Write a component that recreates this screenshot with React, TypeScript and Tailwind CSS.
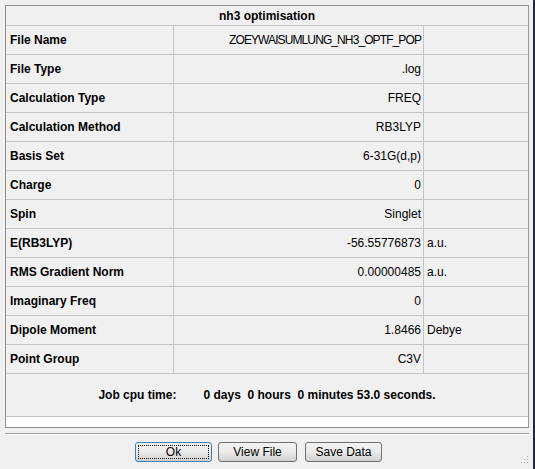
const rows: [string, string, string][] = [
  ["File Name", "ZOEYWAISUMLUNG_NH3_OPTF_POP", ""],
  ["File Type", ".log", ""],
  ["Calculation Type", "FREQ", ""],
  ["Calculation Method", "RB3LYP", ""],
  ["Basis Set", "6-31G(d,p)", ""],
  ["Charge", "0", ""],
  ["Spin", "Singlet", ""],
  ["E(RB3LYP)", "-56.55776873", "a.u."],
  ["RMS Gradient Norm", "0.00000485", "a.u."],
  ["Imaginary Freq", "0", ""],
  ["Dipole Moment", "1.8466", "Debye"],
  ["Point Group", "C3V", ""],
];

function WinButton({ label, focused = false, className = "" }: { label: string; focused?: boolean; className?: string }) {
  return (
    <button
      className={`relative h-[20px] rounded-[3px] border bg-gradient-to-b from-[#f2f2f2] via-[#ebebeb] to-[#cfcfcf] text-[12px] leading-none text-black ${
        focused ? "border-[#3c7fb1]" : "border-[#707070]"
      } ${className}`}
    >
      {focused && (
        <span className="pointer-events-none absolute inset-[2px] border border-dotted border-black" />
      )}
      {label}
    </button>
  );
}

export default function App() {
  return (
    <div
      className="relative flex h-[469px] w-[535px] flex-col overflow-hidden border-r-2 border-[#1e2b3c] bg-[#f0f0f0] text-black"
      style={{ fontFamily: '"Liberation Sans", Arial, sans-serif' }}
    >
      <div className="ml-[5px] mt-[5px] w-[524px] border border-[#8e8e8e] border-r-[#9a9a9a]">
        <div className="flex h-[20px] items-center justify-center border-b border-[#c4c4c4] text-[12px] font-bold">
          nh3 optimisation
        </div>
        {rows.map(([label, value, unit]) => (
          <div key={label} className="flex h-[29px] border-b border-[#c4c4c4] text-[12px]">
            <div className="flex w-[168px] items-center border-r border-[#c4c4c4] pl-[4px] font-bold">
              {label}
            </div>
            <div
              className={`flex w-[250px] items-center justify-end border-r border-[#c4c4c4] pr-[2px] ${
                value.length > 20 ? "tracking-[-0.9px]" : ""
              }`}
            >
              {value}
            </div>
            <div className="flex flex-1 items-center pl-[3px]">{unit}</div>
          </div>
        ))}
        <div className="flex h-[43px] items-center justify-center border-b border-[#c4c4c4] text-[12px] font-bold">
          <span className="mr-[27px]">Job cpu time:</span>
          <span className="whitespace-pre">0 days  0 hours  0 minutes 53.0 seconds.</span>
        </div>
        <div className="h-[10px] bg-white" />
      </div>
      <div className="ml-[5px] mt-[5px] w-[524px] border-b border-t border-b-white border-t-[#a0a0a0]" />
      <div className="mt-[7px] flex pl-[135px]">
        <WinButton label="Ok" focused className="w-[77px]" />
        <WinButton label="View File" className="ml-[6px] w-[79px]" />
        <WinButton label="Save Data" className="ml-[8px] w-[77px]" />
      </div>
      <svg className="absolute bottom-[3px] right-[4px]" width="11" height="11" viewBox="0 0 11 11">
        {[
          [9, 1],
          [9, 4],
          [6, 4],
          [9, 7],
          [6, 7],
          [3, 7],
        ].map(([x, y]) => (
          <rect key={`${x}-${y}`} x={x} y={y} width="1" height="1" fill="#a8a8a8" />
        ))}
      </svg>
    </div>
  );
}
